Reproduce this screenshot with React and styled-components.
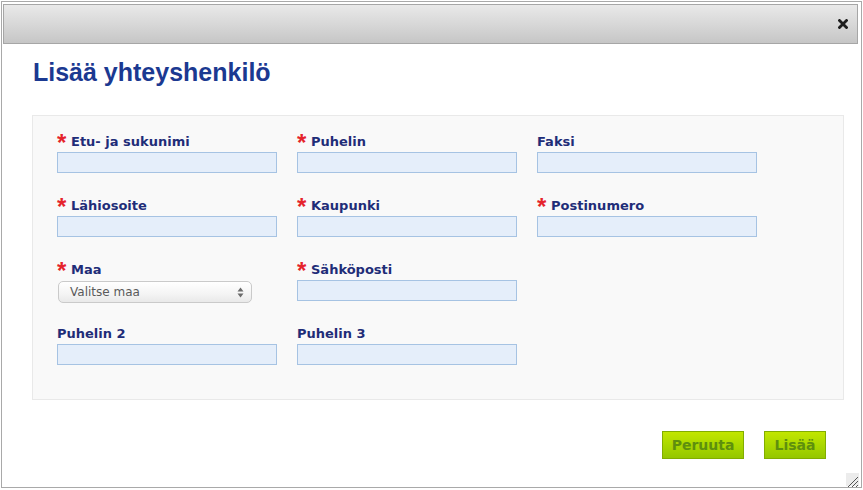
import React from 'react'
import styled, { createGlobalStyle } from 'styled-components'

const GlobalStyle = createGlobalStyle`
  html, body {
    margin: 0;
    padding: 0;
    background: #ffffff;
  }
  body {
    font-family: "DejaVu Sans", Verdana, sans-serif;
  }
`

const Dialog = styled.div`
  position: relative;
  box-sizing: border-box;
  margin: 1px 0 0 1px;
  width: 861px;
  height: 487px;
  border: 1px solid #a9a9a9;
  padding: 2px 3px 0 1px;
  background: #fff;
`

const TitleBar = styled.div`
  box-sizing: border-box;
  height: 40px;
  border: 1px solid #a6a6a6;
  background: linear-gradient(to bottom, #e9e9e9 0%, #d6d6d6 55%, #c6c6c6 100%);
  display: flex;
  align-items: center;
  justify-content: flex-end;
  padding-right: 9px;
`

const CloseButton = styled.button`
  border: none;
  background: transparent;
  padding: 0;
  width: 11px;
  height: 11px;
  display: flex;
  align-items: center;
  justify-content: center;
  cursor: pointer;
`

const Content = styled.div`
  padding: 0 0 0 29px;
`

const Heading = styled.h1`
  margin: 13px 0 0 1px;
  font-family: "Liberation Sans", Arial, sans-serif;
  font-size: 25px;
  line-height: 30px;
  font-weight: bold;
  color: #1b3991;
`

const Panel = styled.div`
  box-sizing: border-box;
  margin-top: 28px;
  width: 812px;
  height: 285px;
  background: #f9f9f9;
  border: 1px solid #e9e9e9;
  padding: 18px 0 0 24px;
`

const FieldGrid = styled.div`
  display: grid;
  grid-template-columns: repeat(3, 220px);
  grid-auto-rows: 39px;
  column-gap: 20px;
  row-gap: 25px;
`

const Field = styled.div`
  display: flex;
  flex-direction: column;
`

const Label = styled.label`
  display: block;
  height: 16px;
  line-height: 16px;
  margin-bottom: 2px;
  font-size: 13px;
  font-weight: bold;
  color: #1f2d78;
  white-space: nowrap;
`

const Required = styled.span`
  display: inline-block;
  width: 14px;
  font-family: "Liberation Sans", Arial, sans-serif;
  font-size: 24px;
  line-height: 0;
  font-weight: bold;
  color: #e5232b;
  vertical-align: -5px;
`

const TextInput = styled.input`
  box-sizing: border-box;
  width: 220px;
  height: 21px;
  margin: 0;
  border: 1px solid #a6c3e3;
  background: #e5eefa;
  outline: none;
  padding: 0 4px;
  font-family: "DejaVu Sans", Verdana, sans-serif;
  font-size: 12px;
`

const SelectBox = styled.div`
  box-sizing: border-box;
  flex: none;
  width: 194px;
  height: 22px;
  margin: 1px 0 0 1px;
  border: 1px solid #cacaca;
  border-radius: 5px;
  background: linear-gradient(to bottom, #ffffff 0%, #f4f4f4 60%, #e9e9e9 100%);
  display: flex;
  align-items: center;
  justify-content: space-between;
  padding: 0 7px 0 11px;
  font-size: 12px;
  color: #5a5a5a;
  cursor: default;
`

const Footer = styled.div`
  width: 812px;
  display: flex;
  justify-content: flex-end;
  gap: 20px;
  margin-top: 31px;
  padding-right: 18px;
  box-sizing: border-box;
`

const ActionButton = styled.button`
  box-sizing: border-box;
  width: ${p => p.$width}px;
  height: 28px;
  padding: 0;
  border: 1px solid #82ad00;
  background: linear-gradient(to bottom, #c2e600 0%, #aad800 50%, #95c700 100%);
  font-family: "DejaVu Sans", Verdana, sans-serif;
  font-size: 14px;
  font-weight: bold;
  color: #5e8f0e;
  cursor: pointer;
`

const ResizeGrip = styled.div`
  position: absolute;
  right: 2px;
  bottom: 1px;
  width: 13px;
  height: 13px;
  background: #ececec;
`

const fields = [
  { label: 'Etu- ja sukunimi', required: true },
  { label: 'Puhelin', required: true },
  { label: 'Faksi' },
  { label: 'Lähiosoite', required: true },
  { label: 'Kaupunki', required: true },
  { label: 'Postinumero', required: true },
  { label: 'Maa', required: true, select: true },
  { label: 'Sähköposti', required: true },
  { empty: true },
  { label: 'Puhelin 2' },
  { label: 'Puhelin 3' },
]

function CloseIcon() {
  return (
    <svg width="10" height="10" viewBox="0 0 10 10">
      <path d="M1.5 1.5 L8.5 8.5 M8.5 1.5 L1.5 8.5" stroke="#1e1e1e" strokeWidth="2.8" strokeLinecap="square" />
    </svg>
  )
}

function SelectArrows() {
  return (
    <svg width="7" height="11" viewBox="0 0 7 11">
      <path d="M3.5 0.5 L6.5 4.5 L0.5 4.5 Z" fill="#6b6b6b" />
      <path d="M3.5 10.5 L6.5 6.5 L0.5 6.5 Z" fill="#6b6b6b" />
    </svg>
  )
}

export default function App() {
  return (
    <>
      <GlobalStyle />
      <Dialog>
        <TitleBar>
          <CloseButton aria-label="Sulje">
            <CloseIcon />
          </CloseButton>
        </TitleBar>
        <Content>
          <Heading>Lisää yhteyshenkilö</Heading>
          <Panel>
            <FieldGrid>
              {fields.map((f, i) =>
                f.empty ? (
                  <div key={i} />
                ) : (
                  <Field key={i}>
                    <Label>
                      {f.required && <Required>*</Required>}
                      {f.label}
                    </Label>
                    {f.select ? (
                      <SelectBox>
                        <span>Valitse maa</span>
                        <SelectArrows />
                      </SelectBox>
                    ) : (
                      <TextInput type="text" />
                    )}
                  </Field>
                )
              )}
            </FieldGrid>
          </Panel>
          <Footer>
            <ActionButton $width={82}>Peruuta</ActionButton>
            <ActionButton $width={62}>Lisää</ActionButton>
          </Footer>
        </Content>
        <ResizeGrip>
          <svg width="13" height="13" viewBox="0 0 13 13">
            <path d="M12 2 L2 12 M12 6 L6 12 M12 10 L10 12" stroke="#555" strokeWidth="1" />
          </svg>
        </ResizeGrip>
      </Dialog>
    </>
  )
}
